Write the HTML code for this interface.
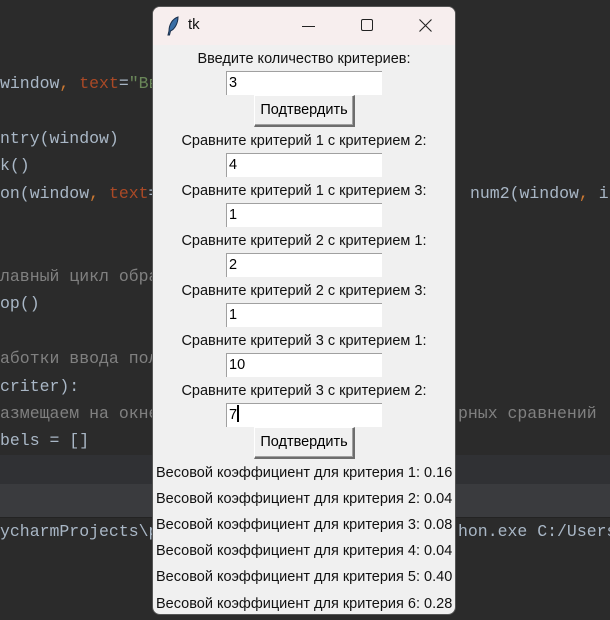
<!DOCTYPE html>
<html><head><meta charset="utf-8"><style>
*{margin:0;padding:0;box-sizing:border-box}
body{width:610px;height:620px;overflow:hidden;background:#2b2b2b;position:relative;font-family:"Liberation Sans",sans-serif}
.code{position:absolute;left:0;font-family:"Liberation Mono",monospace;font-size:16.5px;color:#a9b7c6;white-space:pre;line-height:20px}
.o{color:#cc7832}.k{color:#aa4926}.g{color:#6a8759}.c{color:#808080}
.band1{position:absolute;left:0;top:455px;width:610px;height:29px;background:#303134}
.band2{position:absolute;left:0;top:484px;width:610px;height:34px;background:#3a3b3e;border-bottom:1px solid #232323}
.win{position:absolute;left:152px;top:6px;width:304px;height:609px;background:#f0f0f0;border-radius:8px;overflow:hidden;border:1px solid #555}
.title{position:absolute;left:0;top:0;width:100%;height:38px;background:#f7eeee}
.lbl{position:absolute;left:0;width:302px;text-align:center;font-size:14.5px;color:#111;white-space:nowrap}
.ent{position:absolute;left:73px;width:156px;height:24px;background:#fff;border-top:1px solid #a0a0a0;border-left:1px solid #a0a0a0;font-size:14.5px;padding-left:2px;line-height:22px;color:#000}
.btn{position:absolute;left:101px;width:101px;height:32px;background:#f0f0f0;border:1px solid #fff;border-right:2px solid #6d6d6d;border-bottom:2px solid #6d6d6d;box-shadow:inset -1px -1px 0 #a0a0a0;font-size:14.5px;text-align:center;line-height:28px;color:#000}
.res{position:absolute;left:3px;font-size:14.5px;color:#111;white-space:nowrap}
</style></head><body>
<div class="band1"></div><div class="band2"></div>
<div class="code" style="top:74px">window<span class="o">,</span> <span class="k">text</span>=<span class="g">"Вв</span></div>
<div class="code" style="top:129px">ntry(window)</div>
<div class="code" style="top:156px">k()</div>
<div class="code" style="top:184px">on(window<span class="o">,</span> <span class="k">text</span>=</div>
<div class="code" style="top:184px;left:470px">num2(window<span class="o">,</span> i</div>
<div class="code c" style="top:267px">лавный цикл обра</div>
<div class="code" style="top:294px">op()</div>
<div class="code c" style="top:349px">аботки ввода пол</div>
<div class="code" style="top:377px">criter):</div>
<div class="code c" style="top:404px">азмещаем на окне</div>
<div class="code c" style="top:404px;left:458px">рных сравнений</div>
<div class="code" style="top:431px">bels = []</div>
<div class="code" style="top:522px">ycharmProjects\p</div>
<div class="code" style="top:522px;left:458px">hon.exe C:/Users</div>
<div class="win">
 <div class="title">
  <svg style="position:absolute;left:13px;top:9px" width="14" height="20" viewBox="0 0 14 20"><path d="M12 1 C6 3 3 9 3 15 L2 19 L3.5 19 L4.5 15 C9 13 12 7 12 1Z" fill="#3a6ea5" stroke="#1b2f4a" stroke-width="1"/></svg>
  <div style="position:absolute;left:35px;top:9px;font-size:15px;color:#111">tk</div>
  <div style="position:absolute;left:149px;top:19px;width:13px;height:1px;background:#222"></div>
  <div style="position:absolute;left:208px;top:12px;width:12px;height:12px;border:1px solid #222;border-radius:2px"></div>
  <svg style="position:absolute;left:266px;top:12px" width="13" height="13"><path d="M0.5 0.5L12.5 12.5M12.5 0.5L0.5 12.5" stroke="#222" stroke-width="1.1"/></svg>
 </div>
 <div class="lbl" style="top:44px">Введите количество критериев:</div>
 <div class="ent" style="top:64px">3</div>
 <div class="btn" style="top:88px">Подтвердить</div>
 <div class="lbl" style="top:126px">Сравните критерий 1 с критерием 2:</div>
 <div class="ent" style="top:146px">4</div>
 <div class="lbl" style="top:176px">Сравните критерий 1 с критерием 3:</div>
 <div class="ent" style="top:196px">1</div>
 <div class="lbl" style="top:226px">Сравните критерий 2 с критерием 1:</div>
 <div class="ent" style="top:246px">2</div>
 <div class="lbl" style="top:276px">Сравните критерий 2 с критерием 3:</div>
 <div class="ent" style="top:296px">1</div>
 <div class="lbl" style="top:326px">Сравните критерий 3 с критерием 1:</div>
 <div class="ent" style="top:346px">10</div>
 <div class="lbl" style="top:376px">Сравните критерий 3 с критерием 2:</div>
 <div class="ent" style="top:396px">7<span style="display:inline-block;width:2px;height:17px;background:#000;vertical-align:-3px"></span></div>
 <div class="btn" style="top:420px">Подтвердить</div>
 <div class="res" style="top:458px">Весовой коэффициент для критерия 1: 0.16</div>
 <div class="res" style="top:484px">Весовой коэффициент для критерия 2: 0.04</div>
 <div class="res" style="top:510px">Весовой коэффициент для критерия 3: 0.08</div>
 <div class="res" style="top:536px">Весовой коэффициент для критерия 4: 0.04</div>
 <div class="res" style="top:562px">Весовой коэффициент для критерия 5: 0.40</div>
 <div class="res" style="top:589px">Весовой коэффициент для критерия 6: 0.28</div>
</div>
</body></html>
